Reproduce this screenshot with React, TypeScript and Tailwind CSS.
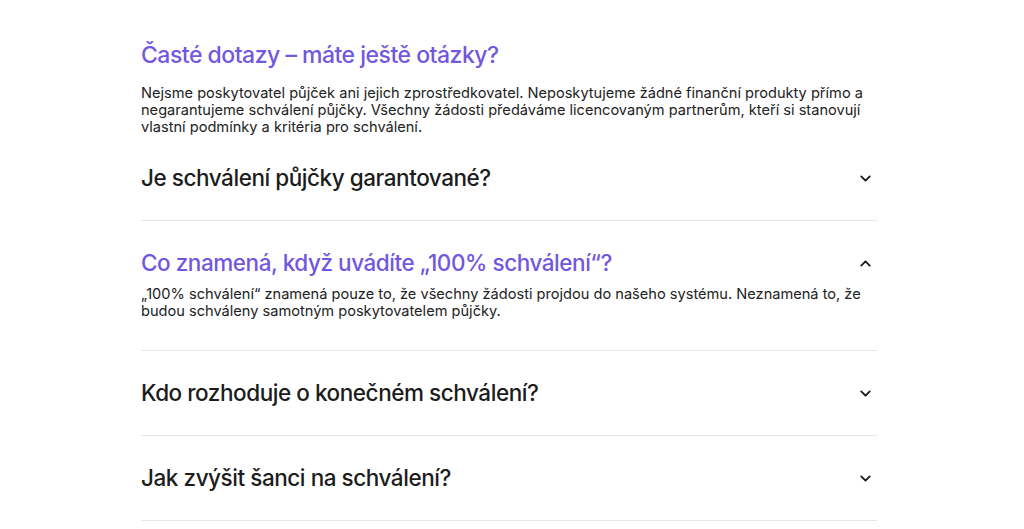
import React, { useState } from 'react';

interface IFaq {
    q: string;
    a: string;
}

const faqs: IFaq[] = [
    { q: 'Je schválení půjčky garantované?', a: 'Ne. O schválení vždy rozhoduje poskytovatel půjčky podle svých vlastních kritérií.' },
    { q: 'Co znamená, když uvádíte „100% schválení“?', a: '„100% schválení“ znamená pouze to, že všechny žádosti projdou do našeho systému. Neznamená to, že budou schváleny samotným poskytovatelem půjčky.' },
    { q: 'Kdo rozhoduje o konečném schválení?', a: 'O konečném schválení rozhoduje vždy licencovaný poskytovatel.' },
    { q: 'Jak zvýšit šanci na schválení?', a: 'Vyplňte všechny údaje pravdivě a úplně.' },
];

const Chevron: React.FC<{ open: boolean }> = ({ open }) => (
    <svg width="17" height="17" viewBox="0 0 24 24" fill="none" stroke="#1a1a1a" strokeWidth={2.6} strokeLinecap="round" strokeLinejoin="round" className={open ? 'rotate-180' : ''}>
        <path d="m6 9 6 6 6-6" />
    </svg>
);

const App: React.FC = () => {
    const [open, setOpen] = useState<number>(1);

    return (
        <div className="min-h-screen bg-white pt-[39px] font-['Inter',sans-serif] text-[#1c1c1c]">
            <div className="ml-[141px] w-[736px]">
                <h2 className="text-[23px] leading-[32px] font-medium tracking-[-0.5px] text-[#7257df]">
                    Časté dotazy – máte ještě otázky?
                </h2>
                <p className="mt-[14px] text-[14.6px] leading-[17px] text-[#222]">
                    Nejsme poskytovatel půjček ani jejich zprostředkovatel. Neposkytujeme žádné finanční produkty přímo a negarantujeme schválení půjčky. Všechny žádosti předáváme licencovaným partnerům, kteří si stanovují vlastní podmínky a kritéria pro schválení.
                </p>
                <div>
                    {faqs.map((faq, index) => (
                        <div key={index} className="border-b border-[#e6e6e6]">
                            <button
                                onClick={() => setOpen(open === index ? -1 : index)}
                                className="flex w-full items-center justify-between pt-[27px] pb-[27px] text-left"
                            >
                                <span className={`text-[22.5px] leading-[30px] font-medium tracking-[-0.45px] ${open === index ? 'text-[#7257df]' : 'text-[#1c1c1c]'}`}>
                                    {faq.q}
                                </span>
                                <span className="mr-[3px]">
                                    <Chevron open={open === index} />
                                </span>
                            </button>
                            {open === index && (
                                <p className="-mt-[19px] pb-[30px] pr-[10px] text-[14.6px] leading-[17px] text-[#222]">
                                    {faq.a}
                                </p>
                            )}
                        </div>
                    ))}
                </div>
            </div>
        </div>
    );
};

export default App;
